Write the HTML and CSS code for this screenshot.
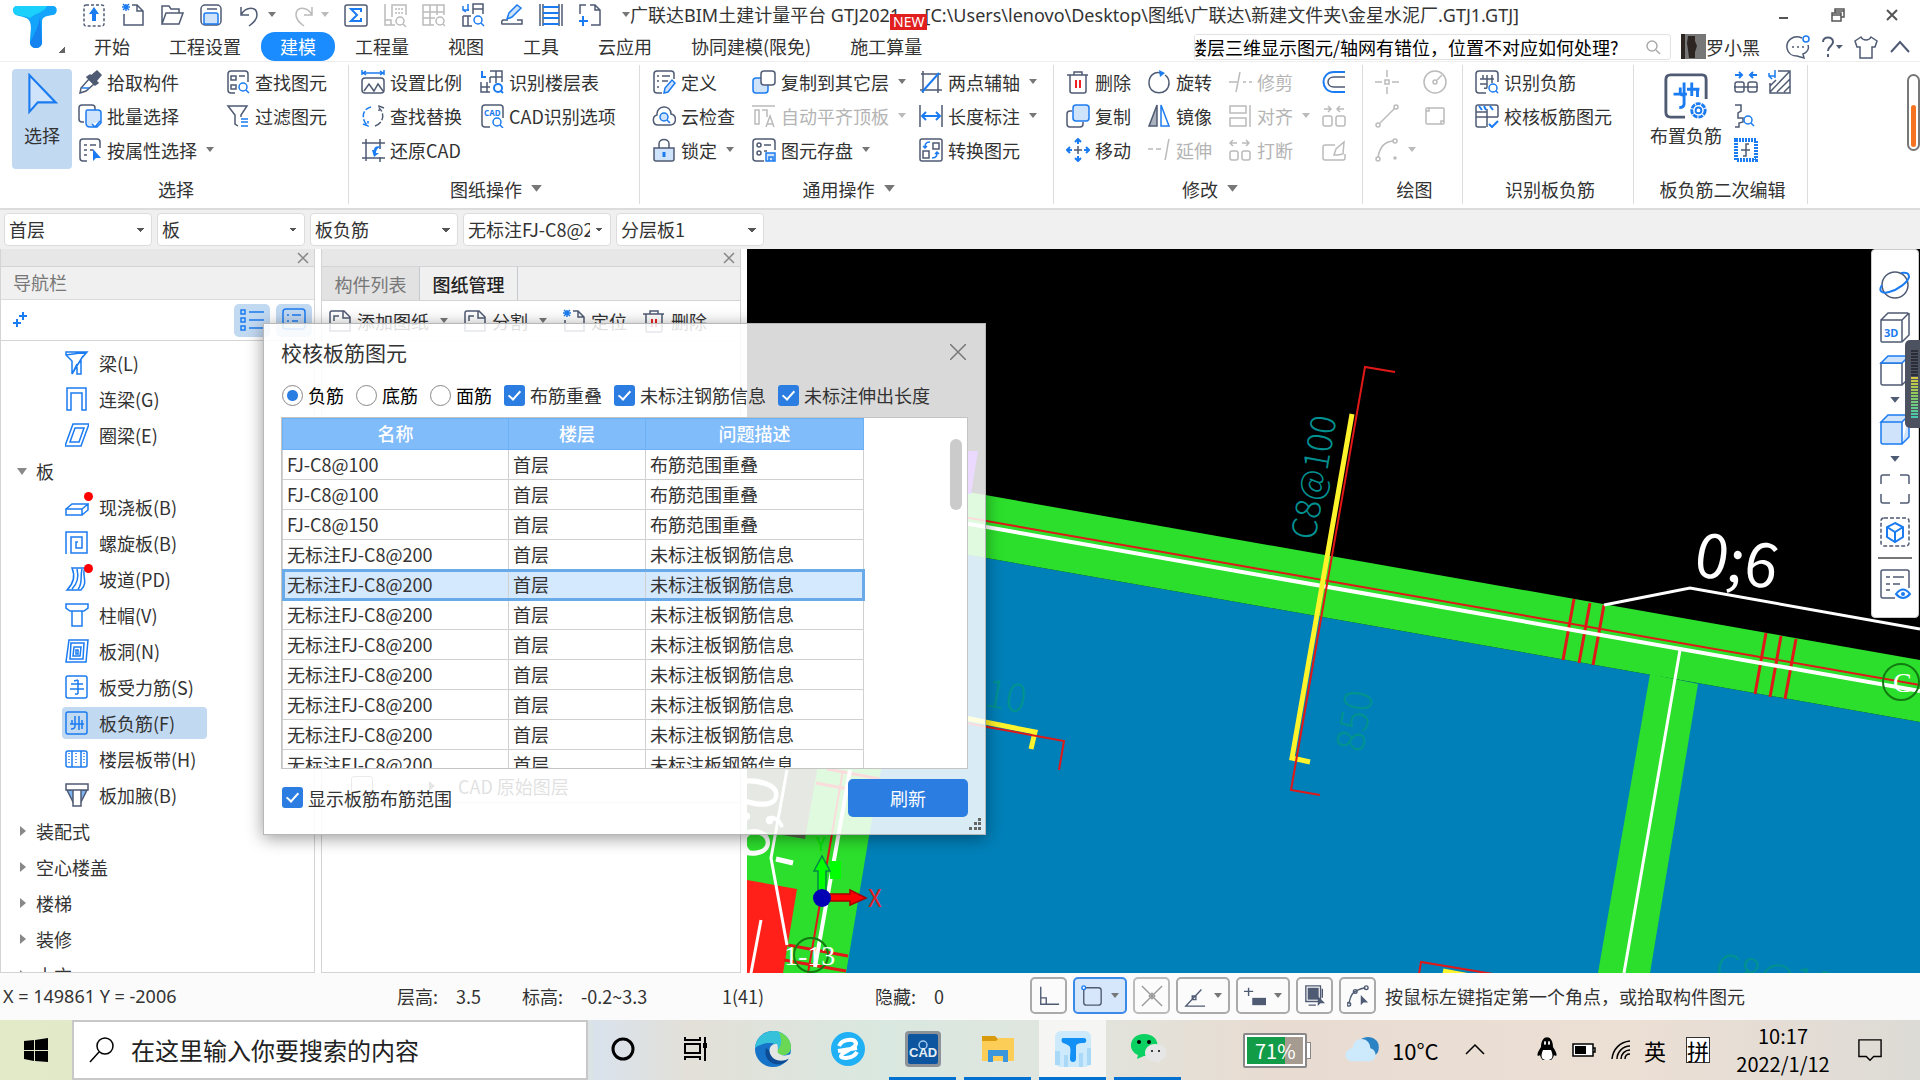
FILE: index.html
```html
<!DOCTYPE html>
<html lang="zh-CN">
<head>
    <meta charset="UTF-8">
    <meta name="viewport" content="width=device-width, initial-scale=1.0">
    <title>广联达BIM土建计量平台 GTJ2021</title>
    <link rel="stylesheet" href="styles.css">
</head>
<body>
    <!-- 图标库 -->
    <svg class="sprite" aria-hidden="true">
        <symbol id="logo" viewBox="0 0 46 44">
            <path d="M5 1h36c5 0 5 8 0 9-6 1-10 1-11 6v21c0 8-12 8-12 0 0-9 2-14 0-20C16 12 10 12 4 10 0 8 0 1 5 1z" fill="#12a5fb" stroke="none"/>
            <path d="M5 1h30c-2 6-11 7-17 12C14 11 9 11 4 10 0 8 0 1 5 1z" fill="#1bd0fb" stroke="none"/>
            <path d="M28 12l2 25c0 8-12 8-12 0 5-8 8-15 10-25z" fill="#1583f0" stroke="none"/>
        </symbol>
        <symbol id="arrow" viewBox="0 0 8 6"><path d="M0 0h8L4 5z" class="solid"/></symbol>
        <symbol id="upload" viewBox="0 0 24 24"><rect x="2" y="2" width="20" height="21" rx="2" stroke-dasharray="3 2"/><path d="M12 4l5 7h-3v7h-4v-7H7z" class="bf"/></symbol>
        <symbol id="newfile" viewBox="0 0 24 24"><path d="M11 2h5l6 6v14H3V11M16 2v6h6"/><path class="b" d="M1 4h8M5 1v7M2 1l6 6M8 1L2 7"/></symbol>
        <symbol id="open" viewBox="0 0 24 24"><path d="M2 21V3h7l2 3h8v4M2 21L6 10h17l-4 11z"/></symbol>
        <symbol id="save" viewBox="0 0 24 24"><rect x="2" y="2" width="20" height="20" rx="4"/><path d="M8 6h10"/><path class="bl" d="M5 21v-9q0-2 2-2h10q2 0 2 2v9z"/></symbol>
        <symbol id="undo" viewBox="0 0 24 24"><path d="M3 4v8h8M3 12C8 3 19 3 19 12c0 5-4 8-8 11"/></symbol>
        <symbol id="redo" viewBox="0 0 24 24"><path d="M21 4v8h-8M21 12C16 3 5 3 5 12c0 5 4 8 8 11"/></symbol>
        <symbol id="sum" viewBox="0 0 24 24"><rect x="1" y="2" width="22" height="21" rx="2"/><path class="b" stroke-width="2" d="M17 9V6H7l6 6-6 6h10v-3"/></symbol>
        <symbol id="sheetfind" viewBox="0 0 24 24"><path d="M2 1v21h10M2 17h6v5M9 14V2h14v10"/><path stroke-dasharray="2 1" d="M12 6h9M12 10h9"/><circle cx="17" cy="18" r="4"/><path d="M20 21l3 3"/></symbol>
        <symbol id="gridfind" viewBox="0 0 24 24"><path d="M12 22H1V2h21v10M1 9h21M1 15h12M8 2v20M15 2v10"/><circle cx="18" cy="18" r="4"/><path d="M21 21l2 2"/></symbol>
        <symbol id="planfind" viewBox="0 0 24 24"><path d="M12 11V1h10v10M12 6h10M2 13v10h9M2 13h8M7 13v10"/><path class="b" d="M7 1v7M2 3v4h6M5 9l-3-2"/><circle class="b" cx="17" cy="17" r="4"/><path class="b" d="M20 20l3 3"/></symbol>
        <symbol id="floors" viewBox="0 0 24 24"><path d="M10 7h12M10 7v6M16 1v12M10 1h12v11M1 12v10h9M1 17h9M7 12v10"/><path class="b" stroke-width="2" d="M2 1v6h4"/><circle class="b" stroke-width="2" cx="18" cy="18" r="4"/><path class="b" stroke-width="2" d="M21 21l2 2"/></symbol>
        <symbol id="pen" viewBox="0 0 24 24"><path d="M8 17H3q-2 1-1 4h20v-4h-5"/><path class="bl" d="M7 16l2-6 8-8 4 3-9 9z"/></symbol>
        <symbol id="film" viewBox="0 0 24 24"><path d="M1 1v22M4 1v22M20 1v22M23 1v22"/><path class="b" stroke-width="2" d="M4 4h16M4 10h16M4 15h16M4 21h16"/></symbol>
        <symbol id="addfile" viewBox="0 0 24 24"><path d="M2 11V2h6M12 2h5l5 5v15h-9M17 2v5h5"/><path class="b" stroke-width="2" d="M1 18h9M5 13v10"/></symbol>
        <symbol id="cursor" viewBox="0 0 30 40"><path class="bl" fill="#a9cbf6" stroke-width="2" d="M3 2v35l8-9h17z"/></symbol>
        <symbol id="picker" viewBox="0 0 24 24"><path fill="#4f5b73" d="M13 6l6-5 4 4-5 6 2 2-3 2-8-8 3-2z"/><path d="M11 9l5 5-8 7-6 2 1-5z"/><path class="b" d="M4 18h7"/></symbol>
        <symbol id="batch" viewBox="0 0 24 24"><path d="M17 6V4q0-3-3-3H4Q1 1 1 4v11q0 3 3 3h2"/><path class="bl" d="M9 6h11q3 0 3 3v10l-4 4h-7q-4 0-4-4V8q0-2 1-2zM14 20l3 3 5-6"/></symbol>
        <symbol id="props" viewBox="0 0 24 24"><path d="M9 23H5q-3 0-3-3V4q0-3 3-3h14q3 0 3 3v6M6 7h3M12 7h6M6 12h3M12 12h3M6 17h3"/><path class="bf" d="M15 11v12l3-3h5z"/></symbol>
        <symbol id="find" viewBox="0 0 24 24"><path d="M9 23H5q-3 0-3-3V4q0-3 3-3h14q3 0 3 3v8M5 6h5v4H5zM13 6h6M5 15h5v4H5z"/><circle class="b" cx="17" cy="17" r="4"/><path class="b" d="M20 20l3 3"/></symbol>
        <symbol id="filter" viewBox="0 0 24 24"><path d="M12 22l-3-2v-9L2 2h19l-6 9v2"/><path class="b" d="M15 15h7M15 18h7M15 22h7"/></symbol>
        <symbol id="scale" viewBox="0 0 24 24"><rect x="1" y="8" width="22" height="15" rx="3"/><path d="M3 21l5-7 5 7 4-7 5 7"/><path class="b" d="M1 0v5M23 0v5M2 3h20M5 1L2 3l3 2M19 1l3 2-3 2"/></symbol>
        <symbol id="swap" viewBox="0 0 24 24"><path class="b" stroke-dasharray="6 2" d="M10 3C1 5 0 15 6 21M2 20l5 2V17"/><path stroke-dasharray="7 2" d="M14 22c9-3 10-13 4-18M23 4l-5-2v5"/></symbol>
        <symbol id="restore" viewBox="0 0 24 24"><path d="M1 5h23M5 1v22M1 20h23M19 1v10M19 19v5"/><path class="bf" d="M21 9c-5 0-6 4-6 6h3l-5 4-2-7h2c0-3 3-5 8-3z"/></symbol>
        <symbol id="cadopt" viewBox="0 0 24 24"><path d="M10 23H5q-3 0-3-3V4q0-3 3-3h15q3 0 3 3v10"/><text x="4" y="12" class="tiny">CAD</text><circle class="b" cx="17" cy="18" r="4"/><path class="b" d="M20 21l3 3"/></symbol>
        <symbol id="define" viewBox="0 0 24 24"><path d="M10 23H5q-3 0-3-3V4q0-3 3-3h14q3 0 3 3v5M5 6h2M10 6h8M5 11h2M10 11h6M5 17h2"/><path class="bl" d="M12 23l1-5 7-8 3 3-7 9z"/></symbol>
        <symbol id="cloud" viewBox="0 0 24 24"><path d="M6 21c-6 0-6-9-1-10C4 1 19 0 19 10c6 1 6 11-1 11z"/><circle class="bl" cx="12" cy="13" r="4"/><path class="b" d="M15 16l3 3"/></symbol>
        <symbol id="lock" viewBox="0 0 24 24"><path d="M7 10V6c0-6 10-6 10 0v4"/><path fill="#cfe3fb" d="M2 10h20v11q0 2-2 2H4q-2 0-2-2z"/><path class="b" stroke-width="3" d="M12 14v5"/></symbol>
        <symbol id="copyto" viewBox="0 0 24 24"><rect class="bl" x="1" y="8" width="15" height="15" rx="3"/><rect x="9" y="1" width="14" height="14" rx="3" fill="#fff"/></symbol>
        <symbol id="align" viewBox="0 0 24 24"><path d="M0 2h23M3 6h4v14H3zM10 6h5v7M14 23l4-11 4 11M15 20h6"/></symbol>
        <symbol id="store" viewBox="0 0 24 24"><path d="M12 23H4q-3 0-3-3V4q0-3 3-3h16q3 0 3 3v8M12 7h7M12 13h3"/><circle cx="7" cy="7" r="2"/><circle cx="7" cy="15" r="2"/><path class="bl" d="M14 15h9v8h-9zM17 23v-4h4v4"/></symbol>
        <symbol id="axis" viewBox="0 0 24 24"><path d="M2 4h20M4 1v22M1 20h22M19 4v19"/><path class="b" stroke-width="2" d="M3 22L20 3"/></symbol>
        <symbol id="dim" viewBox="0 0 24 24"><path d="M1 1v22M23 1v22"/><path class="b" stroke-width="2" d="M3 12h18M7 8l-4 4 4 4M17 8l4 4-4 4"/></symbol>
        <symbol id="convert" viewBox="0 0 24 24"><rect x="1" y="1" width="22" height="22" rx="2"/><path d="M14 5h6v6h-6zM4 13h6v7H4z"/><path class="b" d="M11 4C6 4 6 7 6 10M4 8l2 2 2-2M13 20c5 0 5-3 5-6M16 16l2-2 2 2"/></symbol>
        <symbol id="trash" viewBox="0 0 24 24"><path d="M1 5h21M4 5v16q0 2 2 2h12q2 0 2-2V5M8 5V2h8v3"/><path class="r" stroke-width="2" d="M10 10v8M14 10v8"/></symbol>
        <symbol id="copy" viewBox="0 0 24 24"><path d="M17 18v2q0 3-3 3H4q-3 0-3-3V10q0-3 3-3h2"/><rect class="bl" x="7" y="1" width="16" height="16" rx="3"/></symbol>
        <symbol id="move" viewBox="0 0 24 24"><path d="M12 8v8M8 12h8"/><path class="b" stroke-width="2" d="M12 1v5M12 18v5M1 12h5M18 12h5M9 4l3-3 3 3M9 20l3 3 3-3M4 9l-3 3 3 3M20 9l3 3-3 3"/></symbol>
        <symbol id="rotate" viewBox="0 0 24 24"><path d="M14 3C7 1 2 6 2 13c0 13 20 13 20 0 0-3-1-6-4-8"/><path class="bf" d="M12 0l6 3-5 4z"/></symbol>
        <symbol id="mirror" viewBox="0 0 24 24"><path fill="#aab0bc" d="M10 1v21H2z"/><path class="b" d="M14 1v21h8z"/></symbol>
        <symbol id="trim" viewBox="0 0 24 24"><path d="M1 12h8M12 2L8 22M15 12h3M21 12h3"/></symbol>
        <symbol id="extend" viewBox="0 0 24 24"><path d="M1 11h5M9 11h5M22 1c-2 8-2 14-4 21"/></symbol>
        <symbol id="align2" viewBox="0 0 24 24"><path d="M2 2h16v7H2zM2 14h16v8H2zM22 1v22"/></symbol>
        <symbol id="split" viewBox="0 0 24 24"><rect x="2" y="13" width="8" height="9" rx="2"/><rect x="14" y="13" width="8" height="9" rx="2"/><path d="M9 5H2M5 2L2 5l3 3M14 5h7M18 2l3 3-3 3"/></symbol>
        <symbol id="merge" viewBox="0 0 24 24"><rect x="1" y="12" width="9" height="10" rx="2"/><rect x="14" y="12" width="9" height="10" rx="2"/><path class="b" d="M2 5h6M6 2l3 3-3 3M22 5h-6M18 2l-3 3 3 3"/></symbol>
        <symbol id="mergebar" viewBox="0 0 24 24"><rect x="1" y="12" width="9" height="10" rx="2"/><rect x="14" y="12" width="9" height="10" rx="2"/><path d="M0 17h24"/><path class="b" stroke-width="2" d="M1 5h7M5 2l3 3-3 3M23 5h-7M19 2l-3 3 3 3"/></symbol>
        <symbol id="offset" viewBox="0 0 24 24"><path class="b" stroke-width="2" d="M23 2H12C-2 2-2 22 12 22h11"/><path d="M23 7H12c-8 0-8 10 0 10h11"/></symbol>
        <symbol id="editbox" viewBox="0 0 24 24"><path d="M13 7H3q-2 0-2 2v11q0 2 2 2h18q2 0 2-2v-4M12 17l2-6 8-7-1 12-5 1z"/></symbol>
        <symbol id="point" viewBox="0 0 24 24"><path d="M12 0v7M12 17v7M0 12h7M17 12h7M10 10h4v4h-4z"/></symbol>
        <symbol id="circle" viewBox="0 0 24 24"><circle cx="12" cy="12" r="11"/><circle cx="12" cy="12" r="2"/><path d="M14 10l5-5"/></symbol>
        <symbol id="line" viewBox="0 0 24 24"><path d="M5 19L20 4"/><circle cx="3" cy="21" r="2"/><circle cx="21" cy="3" r="2"/></symbol>
        <symbol id="rect" viewBox="0 0 24 24"><rect x="3" y="4" width="18" height="16" rx="1"/><path d="M3 7h3V4M21 17h-3v3"/></symbol>
        <symbol id="arc" viewBox="0 0 24 24"><path d="M3 19C5 9 9 4 18 3"/><circle cx="3" cy="21" r="2"/><circle cx="20" cy="3" r="2"/><circle cx="20" cy="20" r="1"/></symbol>
        <symbol id="barfind" viewBox="0 0 24 24"><path d="M11 23H4q-3 0-3-3V4q0-3 3-3h16q3 0 3 3v8M5 9h14M8 5v4M12 5v12q0 2-3 1M5 14h7M17 5v8"/><circle class="b" cx="18" cy="18" r="4"/><path class="b" d="M21 21l2 2"/></symbol>
        <symbol id="barcheck" viewBox="0 0 24 24"><path d="M11 23H3q-2 0-2-2V3q0-2 2-2h18q2 0 2 2v10M1 13h22M12 5v18M1 8h11"/><path class="b" stroke-width="2" d="M4 2l3 4M9 2l2 4M15 2l3 4M14 20l3 3 6-6"/></symbol>
        <symbol id="layout" viewBox="0 0 46 48"><path stroke-width="3" d="M22 46H7q-5 0-5-5V7q0-5 5-5h33q4 0 4 5v20"/><path class="b" stroke-width="3" d="M10 22h14M24 17h13M17 15v5q0 3 3 3M21 10v22q0 4-5 4M29 10v14M35 17v8"/><circle class="b" stroke-width="3" cx="36" cy="39" r="7" stroke-dasharray="5 1"/><circle class="b" stroke-width="2" cx="36" cy="39" r="3"/></symbol>
        <symbol id="hatch" viewBox="0 0 24 24"><path d="M10 1h12v22H2V13M2 22L21 2M9 22L22 9M16 22l6-6M2 16l6-6"/><path class="b" d="M7 0v8M1 3v3h6M4 9L1 6"/></symbol>
        <symbol id="zig" viewBox="0 0 24 24"><path d="M1 1h6v6l-3 2v5h5v4l-4 1v4H1"/><circle class="b" cx="14" cy="16" r="4"/><path class="b" d="M17 19l3 3"/></symbol>
        <symbol id="frame" viewBox="0 0 24 24"><rect class="b" x="2" y="2" width="20" height="20" stroke-width="4" stroke-dasharray="2 1"/><path d="M15 6h-3v12h-3M7 12h9"/></symbol>
        <symbol id="beam" viewBox="0 0 24 24"><path class="b" d="M1 1h21l-6 7v15h-4V13l-5 10V10L1 4zM1 4L22 1M7 23L18 5"/></symbol>
        <symbol id="link" viewBox="0 0 24 24"><path class="b" d="M2 23V1h19v22h-4V6H6v17z"/></symbol>
        <symbol id="ring" viewBox="0 0 24 24"><path class="b" d="M8 1h16l-8 22H0zM10 5h9l-5 14H5z"/></symbol>
        <symbol id="slab" viewBox="0 0 24 24"><path class="b" d="M1 14h16v6H1zM1 14l6-5h16l-6 5M23 9v6l-6 5"/></symbol>
        <symbol id="spiral" viewBox="0 0 24 24"><path class="b" d="M1 23V1h21v21H6V6h11v11h-6v-6h2"/></symbol>
        <symbol id="ramp" viewBox="0 0 24 24"><path class="b" d="M7 1h13c-4 7 4 14-4 22H2C10 15 10 8 7 1zM12 2c2 8 0 15-5 20M17 2c-2 8 1 15-4 20"/></symbol>
        <symbol id="cap" viewBox="0 0 24 24"><path class="b" d="M1 1h22v4l-4 3H5L1 5zM7 8v15h10V8"/></symbol>
        <symbol id="hole" viewBox="0 0 24 24"><path class="b" d="M4 1h19l-2 22H1zM6 4h13l-1 16H5zM9 8h7l-1 9H8zM11 11h2v4h-2z"/></symbol>
        <symbol id="bar1" viewBox="0 0 24 24"><rect class="b" x="1" y="1" width="21" height="22" rx="2"/><path class="b" d="M6 9h12M5 14h14M13 5v14M9 6l4-1M10 19h3"/></symbol>
        <symbol id="bar2" viewBox="0 0 24 24"><rect class="b" x="1" y="1" width="21" height="22" rx="2"/><path class="b" d="M5 13h14M10 5v10q0 3-4 3M14 5v14M7 9v4M17 9v9"/></symbol>
        <symbol id="strip" viewBox="0 0 24 24"><rect class="b" x="1" y="4" width="21" height="16" rx="2"/><path class="b" d="M7 4v16M16 4v16"/><path class="b" stroke-dasharray="1 2" d="M4 6v12M11 6v12M19 6v12"/></symbol>
        <symbol id="haunch" viewBox="0 0 24 24"><path fill="#7db2f3" d="M2 7h20l-6 12H8z"/><path fill="#fff" d="M1 1h22v6H1zM8 7h8v16H8z"/></symbol>
        <symbol id="list" viewBox="0 0 24 24"><path class="b" d="M1 2h4v4H1zM1 10h4v4H1zM1 18h4v4H1zM9 4h15M9 12h15M9 20h15"/></symbol>
        <symbol id="card" viewBox="0 0 24 24"><rect class="b" x="1" y="1" width="22" height="20" rx="3"/><path class="b" d="M5 7h2M10 7h9M5 13h2M10 13h6"/></symbol>
        <symbol id="plus2" viewBox="0 0 24 24"><path class="b" stroke-width="2" d="M6 15h8M10 11v8M12 8h8M16 4v8"/></symbol>
        <symbol id="sheet" viewBox="0 0 24 24"><path d="M22 22V8l-6-6H4Q2 2 2 4v18zM6 12V7h5M15 2v7h7"/></symbol>
        <symbol id="orbit" viewBox="0 0 32 32"><circle cx="16" cy="16" r="13"/><path class="b" stroke-width="2" d="M3 16c-4 6 0 9 7 7 9-2 19-10 20-15 0-4-3-5-8-4"/></symbol>
        <symbol id="box3d" viewBox="0 0 32 32"><path d="M2 8h21v21q0 1-1 1H3q-1 0-1-1zM2 8l7-7h20M23 8l7-7M23 30l7-7V1"/><text x="5" y="25" class="small3d">3D</text></symbol>
        <symbol id="boxtop" viewBox="0 0 32 32"><path d="M2 8h21v22H4q-2 0-2-2zM23 30l7-7V1"/><path class="bl" d="M2 8l7-7h21l-7 7z"/></symbol>
        <symbol id="boxblue" viewBox="0 0 32 32"><path class="bl" d="M2 8h21v22H4q-2 0-2-2zM2 8l7-7h21l-7 7zM23 30l7-7V1"/></symbol>
        <symbol id="full" viewBox="0 0 32 32"><path d="M11 2H4Q2 2 2 4v7M21 2h7q2 0 2 2v7M2 21v7q0 2 2 2h7M30 21v7q0 2-2 2h-7"/></symbol>
        <symbol id="isolate" viewBox="0 0 32 32"><rect x="2" y="2" width="28" height="28" rx="3" stroke-dasharray="4 2"/><path class="b" stroke-width="2" d="M16 7l8 4v10l-8 5-8-5V11zM8 11l8 5 8-5M16 16v10"/></symbol>
        <symbol id="view" viewBox="0 0 32 32"><path d="M16 30H4q-2 0-2-2V4q0-2 2-2h24q2 0 2 2v16M7 9h4M14 9h11M7 16h4M14 16h7M7 22h4"/><path class="b" stroke-width="2" d="M17 26q7-9 14 0-7 8-14 0z"/><circle class="bf" cx="24" cy="26" r="2"/></symbol>
        <symbol id="ortho" viewBox="0 0 24 24"><path d="M3 2v19h20M3 14h6v7"/></symbol>
        <symbol id="snaprect" viewBox="0 0 24 24"><rect x="3" y="3" width="19" height="19" rx="3"/><circle class="b" cx="3" cy="3" r="2" fill="#fff"/></symbol>
        <symbol id="cross" viewBox="0 0 24 24"><path d="M1 1l22 22M23 1L1 23M9 12l3-3 3 3-3 3z"/></symbol>
        <symbol id="angle" viewBox="0 0 24 24"><path d="M23 23H2L19 5M9 12h4v4H9z"/></symbol>
        <symbol id="bars" viewBox="0 0 24 24"><path d="M5 3v9M0 7h10"/><path class="solid" d="M9 14h15v8H9z"/></symbol>
        <symbol id="stack" viewBox="0 0 24 24"><path class="solid" d="M4 3h12v13H4z"/><path d="M2 1h16v17H2zM20 4v10M5 22h8"/><path class="solid" d="M15 12v11l3-3h5z"/></symbol>
        <symbol id="polyarc" viewBox="0 0 24 24"><path d="M2 21C4 10 6 6 20 3"/><circle cx="2" cy="21" r="2"/><circle cx="9" cy="7" r="2"/><circle cx="21" cy="3" r="2"/><path class="solid" d="M15 11v11l3-3h5z"/></symbol>
    </svg>

    <header class="titlebar">
        <button class="app-logo" aria-label="菜单"><svg><use href="#logo"/></svg></button>
        <div class="title-rows">
            <div class="quick-row">
                <div class="quick">
                    <button><svg><use href="#upload"/></svg></button>
                    <button><svg><use href="#newfile"/></svg></button>
                    <button><svg><use href="#open"/></svg></button>
                    <button><svg><use href="#save"/></svg></button>
                    <button><svg><use href="#undo"/></svg><svg class="arrow"><use href="#arrow"/></svg></button>
                    <button class="off"><svg><use href="#redo"/></svg><svg class="arrow"><use href="#arrow"/></svg></button>
                    <button><svg><use href="#sum"/></svg></button>
                    <button class="off"><svg><use href="#sheetfind"/></svg></button>
                    <button class="off"><svg><use href="#gridfind"/></svg></button>
                    <button><svg><use href="#planfind"/></svg></button>
                    <button><svg><use href="#pen"/></svg></button>
                    <button><svg><use href="#film"/></svg></button>
                    <button><svg><use href="#addfile"/></svg></button>
                </div>
                <div class="doc-title"><svg class="arrow"><use href="#arrow"/></svg>广联达BIM土建计量平台 GTJ2021  -  [C:\Users\lenovo\Desktop\图纸\广联达\新建文件夹\金星水泥厂.GTJ1.GTJ]<span class="new-badge">NEW</span></div>
                <div class="win-controls">
                    <button aria-label="最小化"><svg viewBox="0 0 16 16"><path stroke-width="2" d="M3 11h9"/></svg></button>
                    <button aria-label="还原"><svg viewBox="0 0 16 16"><path d="M2 6h9v8H2zM2 8h9M5 6V2h9v8h-3M5 4h9"/></svg></button>
                    <button aria-label="关闭"><svg viewBox="0 0 16 16"><path stroke-width="2" d="M3 3l10 10M13 3L3 13"/></svg></button>
                </div>
            </div>
            <div class="tab-row">
                <nav class="tabs">
                    <a href="#">开始</a>
                    <a href="#">工程设置</a>
                    <a href="#" class="active">建模</a>
                    <a href="#">工程量</a>
                    <a href="#">视图</a>
                    <a href="#">工具</a>
                    <a href="#">云应用</a>
                    <a href="#">协同建模(限免)</a>
                    <a href="#">施工算量</a>
                </nav>
                <div class="help-search">
                    <input type="text" aria-label="搜索帮助" value="楼层三维显示图元/轴网有错位，位置不对应如何处理?">
                    <svg viewBox="0 0 16 16"><circle cx="7" cy="7" r="5"/><path d="M11 11l4 4"/></svg>
                </div>
                <div class="user">
                    <svg viewBox="0 0 25 25"><path fill="#777" stroke="none" d="M0 0h25v25H0z"/><path fill="#2c2522" stroke="none" d="M0 0h4v25H0zM7 2h7v5l2 5-2 6v6H8l-1-8-1-7z"/></svg>
                    <span>罗小黑</span>
                </div>
                <div class="user-tools">
                    <button aria-label="消息"><svg viewBox="0 0 24 24"><path d="M16 3C7-1 0 6 1 13c1 6 6 8 10 8l7 2-1-4c5-2 6-6 5-9M6 12h2M11 12h2M16 12h2"/><circle class="b" cx="20" cy="4" r="3"/></svg></button>
                    <button aria-label="帮助"><svg viewBox="0 0 24 24"><path stroke-width="2" d="M3 7c0-6 10-6 10 0 0 4-5 4-5 9M8 19v3"/><path class="solid" d="M16 10h7l-4 4z"/></svg></button>
                    <button aria-label="皮肤"><svg viewBox="0 0 24 24"><path d="M7 2L1 6l2 6h3v11h12V12h3l2-6-6-4c-2 4-8 4-10 0z"/></svg></button>
                    <button aria-label="收起"><svg viewBox="0 0 24 24"><path stroke-width="2" d="M3 17l9-10 9 10"/></svg></button>
                </div>
            </div>
        </div>
    </header>

    <section class="ribbon">
        <div class="group g-select">
            <div class="tools">
                <button class="big active"><svg><use href="#cursor"/></svg>选择</button>
                <button class="tool"><svg><use href="#picker"/></svg>拾取构件</button>
                <button class="tool"><svg><use href="#batch"/></svg>批量选择</button>
                <button class="tool"><svg><use href="#props"/></svg>按属性选择<svg class="arrow"><use href="#arrow"/></svg></button>
                <button class="tool"><svg><use href="#find"/></svg>查找图元</button>
                <button class="tool"><svg><use href="#filter"/></svg>过滤图元</button>
            </div>
            <h2>选择</h2>
        </div>
        <div class="group g-sheet">
            <div class="tools">
                <button class="tool"><svg><use href="#scale"/></svg>设置比例</button>
                <button class="tool"><svg><use href="#swap"/></svg>查找替换</button>
                <button class="tool"><svg><use href="#restore"/></svg>还原CAD</button>
                <button class="tool"><svg><use href="#floors"/></svg>识别楼层表</button>
                <button class="tool"><svg><use href="#cadopt"/></svg>CAD识别选项</button>
            </div>
            <h2>图纸操作<svg class="arrow"><use href="#arrow"/></svg></h2>
        </div>
        <div class="group g-common">
            <div class="tools">
                <button class="tool"><svg><use href="#define"/></svg>定义</button>
                <button class="tool"><svg><use href="#cloud"/></svg>云检查</button>
                <button class="tool"><svg><use href="#lock"/></svg>锁定<svg class="arrow"><use href="#arrow"/></svg></button>
                <button class="tool"><svg><use href="#copyto"/></svg>复制到其它层<svg class="arrow"><use href="#arrow"/></svg></button>
                <button class="tool off"><svg><use href="#align"/></svg>自动平齐顶板<svg class="arrow"><use href="#arrow"/></svg></button>
                <button class="tool"><svg><use href="#store"/></svg>图元存盘<svg class="arrow"><use href="#arrow"/></svg></button>
                <button class="tool"><svg><use href="#axis"/></svg>两点辅轴<svg class="arrow"><use href="#arrow"/></svg></button>
                <button class="tool"><svg><use href="#dim"/></svg>长度标注<svg class="arrow"><use href="#arrow"/></svg></button>
                <button class="tool"><svg><use href="#convert"/></svg>转换图元</button>
            </div>
            <h2>通用操作<svg class="arrow"><use href="#arrow"/></svg></h2>
        </div>
        <div class="group g-modify">
            <div class="tools">
                <button class="tool"><svg><use href="#trash"/></svg>删除</button>
                <button class="tool"><svg><use href="#copy"/></svg>复制</button>
                <button class="tool"><svg><use href="#move"/></svg>移动</button>
                <button class="tool"><svg><use href="#rotate"/></svg>旋转</button>
                <button class="tool"><svg><use href="#mirror"/></svg>镜像</button>
                <button class="tool off"><svg><use href="#extend"/></svg>延伸</button>
                <button class="tool off"><svg><use href="#trim"/></svg>修剪</button>
                <button class="tool off"><svg><use href="#align2"/></svg>对齐<svg class="arrow"><use href="#arrow"/></svg></button>
                <button class="tool off"><svg><use href="#split"/></svg>打断</button>
                <button class="tool" aria-label="偏移"><svg><use href="#offset"/></svg></button>
                <button class="tool off" aria-label="合并"><svg><use href="#merge"/></svg></button>
                <button class="tool off" aria-label="编辑"><svg><use href="#editbox"/></svg></button>
            </div>
            <h2>修改<svg class="arrow"><use href="#arrow"/></svg></h2>
        </div>
        <div class="group g-draw">
            <div class="tools">
                <button class="tool off" aria-label="点"><svg><use href="#point"/></svg></button>
                <button class="tool off" aria-label="直线"><svg><use href="#line"/></svg></button>
                <button class="tool off" aria-label="弧"><svg><use href="#arc"/></svg><svg class="arrow"><use href="#arrow"/></svg></button>
                <button class="tool off" aria-label="圆"><svg><use href="#circle"/></svg></button>
                <button class="tool off" aria-label="矩形"><svg><use href="#rect"/></svg></button>
            </div>
            <h2>绘图</h2>
        </div>
        <div class="group g-detect">
            <div class="tools">
                <button class="tool"><svg><use href="#barfind"/></svg>识别负筋</button>
                <button class="tool"><svg><use href="#barcheck"/></svg>校核板筋图元</button>
            </div>
            <h2>识别板负筋</h2>
        </div>
        <div class="group g-edit">
            <div class="tools">
                <button class="big"><svg><use href="#layout"/></svg>布置负筋</button>
                <button class="tool" aria-label="合并负筋"><svg><use href="#mergebar"/></svg></button>
                <button class="tool" aria-label="查改标注"><svg><use href="#zig"/></svg></button>
                <button class="tool" aria-label="布筋范围"><svg><use href="#frame"/></svg></button>
                <button class="tool" aria-label="应用同名"><svg><use href="#hatch"/></svg></button>
            </div>
            <h2>板负筋二次编辑</h2>
        </div>
        <div class="ribbon-scroll"><i></i></div>
    </section>

    <section class="combos">
        <select aria-label="楼层"><option>首层</option></select>
        <select aria-label="类别"><option>板</option></select>
        <select aria-label="构件类型"><option>板负筋</option></select>
        <select aria-label="构件"><option>无标注FJ-C8@200</option></select>
        <select aria-label="分层"><option>分层板1</option></select>
    </section>

    <main class="workspace">
        <aside class="panel nav-panel">
            <div class="panel-grip"><button aria-label="关闭"><svg viewBox="0 0 12 12"><path d="M1 1l10 10M11 1L1 11"/></svg></button></div>
            <h3>导航栏</h3>
            <div class="nav-tools">
                <button><svg><use href="#plus2"/></svg></button>
                <button class="on"><svg><use href="#list"/></svg></button>
                <button class="on"><svg><use href="#card"/></svg></button>
            </div>
            <ul class="tree">
                <li class="leaf"><svg><use href="#beam"/></svg>梁(L)</li>
                <li class="leaf"><svg><use href="#link"/></svg>连梁(G)</li>
                <li class="leaf"><svg><use href="#ring"/></svg>圈梁(E)</li>
                <li class="branch open">板</li>
                <li class="leaf dot"><svg><use href="#slab"/></svg>现浇板(B)</li>
                <li class="leaf"><svg><use href="#spiral"/></svg>螺旋板(B)</li>
                <li class="leaf dot"><svg><use href="#ramp"/></svg>坡道(PD)</li>
                <li class="leaf"><svg><use href="#cap"/></svg>柱帽(V)</li>
                <li class="leaf"><svg><use href="#hole"/></svg>板洞(N)</li>
                <li class="leaf"><svg><use href="#bar1"/></svg>板受力筋(S)</li>
                <li class="leaf selected"><svg><use href="#bar2"/></svg>板负筋(F)</li>
                <li class="leaf"><svg><use href="#strip"/></svg>楼层板带(H)</li>
                <li class="leaf"><svg><use href="#haunch"/></svg>板加腋(B)</li>
                <li class="branch">装配式</li>
                <li class="branch">空心楼盖</li>
                <li class="branch">楼梯</li>
                <li class="branch">装修</li>
                <li class="branch">土方</li>
            </ul>
        </aside>

        <aside class="panel sheet-panel">
            <div class="panel-grip"><button aria-label="关闭"><svg viewBox="0 0 12 12"><path d="M1 1l10 10M11 1L1 11"/></svg></button></div>
            <div class="panel-tabs">
                <button>构件列表</button>
                <button class="active">图纸管理</button>
            </div>
            <div class="sheet-tools">
                <button class="tool"><svg><use href="#sheet"/></svg>添加图纸<svg class="arrow"><use href="#arrow"/></svg></button>
                <button class="tool"><svg><use href="#sheet"/></svg>分割<svg class="arrow"><use href="#arrow"/></svg></button>
                <button class="tool"><svg><use href="#newfile"/></svg>定位</button>
                <button class="tool"><svg><use href="#trash"/></svg>删除</button>
            </div>
            <div class="sheet-body"></div>
            <div class="layer-row"><i></i><b></b><span>CAD 原始图层</span></div>
            <div class="sheet-rest"></div>
        </aside>

        <div class="canvas">
            <svg class="drawing" viewBox="747 249 1173 724" preserveAspectRatio="xMinYMin slice">
                <path fill="#000" d="M747 249h1173v724H747z"/>
                <path fill="#0080b9" d="M747 516L1920 722V973H747z"/>
                <path fill="#2cdf2c" d="M747 453L1920 660V722L747 516z"/>
                <path fill="#2cdf2c" d="M1650 674l48 10-48 289h-52z"/>
                <path fill="#2cdf2c" d="M747 516h180L869 836l-23 137H747z"/>
                <path fill="#57654a" d="M747 600h100l-42 239-58-10z"/>
                <path fill="#ff2019" d="M747 880l50 9-14 84h-36z"/>
                <path fill="#8000ff" d="M960 451h18l-7 43h-11z"/>
                <g class="red">
                    <path d="M747 479L1920 685"/>
                    <path d="M843 770l-35 203"/>
                    <path stroke-width="3" d="M1574 599l-11 61M1590 603l-11 60M1604 605l-11 60M1766 633l-11 61M1781 636l-11 61M1796 639l-11 60"/>
                    <path stroke-width="3" d="M827 769l53 10M816 783l32 6M788 945l60 11M784 960l62 11"/>
                </g>
                <g class="white">
                    <path stroke-width="4" d="M747 485L1920 691"/>
                    <path stroke-width="3" d="M1680 650l-56 323"/>
                    <path stroke-width="3" d="M1604 605l86-17 230 41"/>
                    <path stroke-width="4" d="M850 770l-35 197"/>
                    <path stroke-width="3" d="M787 770l-16 88 16 87M761 920l-10 53"/>
                    <path stroke-width="5" d="M776 859l17 4"/>
                </g>
                <path class="yellow" d="M1352 414l-60 344 18 4"/>
                <path class="yellow" d="M960 717l75 15-4 17"/>
                <path class="yellow" d="M1443 971l27 5"/>
                <g class="red">
                    <path d="M1395 372l-30-5-74 423 29 5"/>
                    <path d="M960 722l104 19-5 29"/>
                    <path d="M1418 980l3-18 72 12"/>
                </g>
                <text class="cad-num" transform="translate(1692 575) rotate(10)">0;6</text>
                <text class="cad-num" transform="translate(766 862) rotate(-80)">6;0</text>
                <text class="cad-dim" transform="translate(1315 541) rotate(-80)">C8@100</text>
                <text class="cad-dim dim2" transform="translate(1363 753) rotate(-80)">850</text>
                <text class="cad-dim dim2" transform="translate(984 706) rotate(10)">10</text>
                <text class="cad-dim dim2" transform="translate(1714 980) rotate(10)">C8@10</text>
                <circle class="bubble" cx="1901" cy="682" r="18"/>
                <text class="cad-axis" x="1893" y="692">C</text>
                <circle class="bubble" cx="811" cy="955" r="17"/>
                <text class="cad-axis" x="784" y="965">1-13</text>
                <!-- 坐标轴 -->
                <path fill="#0f0" d="M830 861h11v18h-11z"/>
                <path fill="#0f0" stroke="#084" d="M822 856l8 15h-4v27h-8v-27h-4z"/>
                <path fill="#f00" stroke="#a00" d="M866 898l-16 7v-4h-28v-7h28v-4z"/>
                <circle fill="#0000b4" cx="822" cy="898" r="9"/>
                <text class="axis-x" x="868" y="907">X</text>
                <text class="axis-y" x="816" y="851">Y</text>
            </svg>
            <div class="view-bar">
                <button><svg><use href="#orbit"/></svg></button>
                <button><svg><use href="#box3d"/></svg></button>
                <button><svg><use href="#boxtop"/></svg><svg class="arrow"><use href="#arrow"/></svg></button>
                <button><svg><use href="#boxblue"/></svg><svg class="arrow"><use href="#arrow"/></svg></button>
                <button><svg><use href="#full"/></svg></button>
                <button><svg><use href="#isolate"/></svg></button>
                <hr>
                <button><svg><use href="#view"/></svg></button>
            </div>
            <div class="meter"><i></i></div>
        </div>

        <form class="dialog">
            <div class="dialog-head">
                <h1>校核板筋图元</h1>
                <button type="button" aria-label="关闭"><svg viewBox="0 0 16 16"><path d="M0 0l16 16M16 0L0 16"/></svg></button>
            </div>
            <div class="options">
                <label class="strong"><input type="radio" name="kind" checked>负筋</label>
                <label class="strong"><input type="radio" name="kind">底筋</label>
                <label class="strong"><input type="radio" name="kind">面筋</label>
                <label><input type="checkbox" checked>布筋重叠</label>
                <label><input type="checkbox" checked>未标注钢筋信息</label>
                <label><input type="checkbox" checked>未标注伸出长度</label>
            </div>
            <div class="table-box">
                <table>
                    <thead>
                        <tr><th class="c-name">名称</th><th class="c-floor">楼层</th><th class="c-desc">问题描述</th></tr>
                    </thead>
                    <tbody>
                        <tr><td>FJ-C8@100</td><td>首层</td><td>布筋范围重叠</td></tr>
                        <tr><td>FJ-C8@100</td><td>首层</td><td>布筋范围重叠</td></tr>
                        <tr><td>FJ-C8@150</td><td>首层</td><td>布筋范围重叠</td></tr>
                        <tr><td>无标注FJ-C8@200</td><td>首层</td><td>未标注板钢筋信息</td></tr>
                        <tr class="selected"><td>无标注FJ-C8@200</td><td>首层</td><td>未标注板钢筋信息</td></tr>
                        <tr><td>无标注FJ-C8@200</td><td>首层</td><td>未标注板钢筋信息</td></tr>
                        <tr><td>无标注FJ-C8@200</td><td>首层</td><td>未标注板钢筋信息</td></tr>
                        <tr><td>无标注FJ-C8@200</td><td>首层</td><td>未标注板钢筋信息</td></tr>
                        <tr><td>无标注FJ-C8@200</td><td>首层</td><td>未标注板钢筋信息</td></tr>
                        <tr><td>无标注FJ-C8@200</td><td>首层</td><td>未标注板钢筋信息</td></tr>
                        <tr><td>无标注FJ-C8@200</td><td>首层</td><td>未标注板钢筋信息</td></tr>
                    </tbody>
                </table>
                <div class="thumb"></div>
            </div>
            <div class="dialog-foot">
                <label><input type="checkbox" checked>显示板筋布筋范围</label>
                <button type="button" class="primary">刷新</button>
            </div>
            <svg class="resize" viewBox="0 0 12 12"><path d="M9 0h3v3H9zM5 4h3v3H5zM9 4h3v3H9zM0 9h3v3H0zM5 9h3v3H5zM9 9h3v3H9z"/></svg>
        </form>
    </main>

    <footer class="status">
        <span class="s-coord">X = 149861 Y = -2006</span>
        <span class="s-height">层高:<b>3.5</b></span>
        <span class="s-level">标高:<b>-0.2~3.3</b></span>
        <span class="s-count">1(41)</span>
        <span class="s-hidden">隐藏:<b>0</b></span>
        <div class="snap">
            <button><svg><use href="#ortho"/></svg></button>
            <button class="wide active"><svg><use href="#snaprect"/></svg><svg class="arrow"><use href="#arrow"/></svg></button>
            <button class="dim"><svg><use href="#cross"/></svg></button>
            <button class="wide"><svg><use href="#angle"/></svg><svg class="arrow"><use href="#arrow"/></svg></button>
            <button class="wide"><svg><use href="#bars"/></svg><svg class="arrow"><use href="#arrow"/></svg></button>
            <button><svg><use href="#stack"/></svg></button>
            <button><svg><use href="#polyarc"/></svg></button>
        </div>
        <span>按鼠标左键指定第一个角点，或拾取构件图元</span>
    </footer>

    <footer class="taskbar">
        <button class="start" aria-label="开始"><svg viewBox="0 0 24 24"><path d="M0 3l10-1v10H0zM11 2l13-2v12H11zM0 13h10v10L0 21zM11 13h13v11l-13-1z"/></svg></button>
        <label class="win-search">
            <svg viewBox="0 0 26 26"><circle cx="16" cy="9" r="8"/><path d="M10 15L1 25"/></svg>
            <input type="text" placeholder="在这里输入你要搜索的内容">
        </label>
        <div class="apps">
            <button class="plain"><svg viewBox="0 0 36 36"><circle cx="18" cy="18" r="10" fill="none" stroke="#000" stroke-width="3"/></svg></button>
            <button class="plain"><svg viewBox="0 0 36 36"><path fill="none" stroke="#000" stroke-width="2" d="M5 6v3h15V6M5 29v-3h15v3M5 13h15v9H5zM25 6v24"/><path d="M23 12h4v5h-4z"/></svg></button>
            <button class="plain"><svg viewBox="0 0 36 36">
                <circle cx="18" cy="18" r="18" fill="#1673c7"/>
                <path fill="#35c1d9" d="M0 17C2-5 34-6 36 16c0 6-5 9-11 8-3 0-5-2-3-4 3-4-1-8-7-8-7 0-13 3-15 5z"/>
                <path fill="#6ad755" d="M24 1c8 3 12 9 12 15 0 6-5 9-11 8-3 0-5-2-3-4 4-4 6-9 2-19z"/>
                <path fill="#0d4c94" d="M11 17c-3 10 5 18 15 16 4-1 7-3 8-6-9 4-18 0-20-8z"/>
                <path fill="#e3e6e3" d="M22 13c-8-1-10 8-4 14 5 4 12 3 17 0l1-4c-5 2-10 2-13-1-1-2 1-5-1-9z"/>
            </svg></button>
            <button class="plain"><svg viewBox="0 0 36 36"><circle cx="18" cy="18" r="17" fill="#1fb0f5"/><path fill="none" stroke="#fff" stroke-width="4" d="M9 15c3-7 15-8 17-3 1 5-15 9-15 13 0 3 12 3 16-4M8 20l19-3"/></svg></button>
            <button class="running"><svg viewBox="0 0 36 36"><rect width="36" height="36" rx="4" fill="#8d9299"/><rect x="3" y="3" width="30" height="30" rx="2" fill="#0d559e"/><circle cx="18" cy="14" r="4" fill="none" stroke="#9cc8ee"/><text x="4" y="26" class="cad-logo">CAD</text></svg></button>
            <button class="running"><svg viewBox="0 0 36 36"><path fill="#d99b0c" d="M2 5h13l3 3v6H2z"/><path fill="#fdce57" d="M2 10h14l3-3h15v23H2z"/><path fill="#3a96dd" d="M8 19h20v12h-5v-6H13v6H8z"/></svg></button>
            <button class="running current"><svg viewBox="0 0 36 36"><rect width="36" height="36" rx="6" fill="#cdeafc"/><path fill="#a9d9f7" d="M0 20h5v14H0zM9 24h4v12H9zM24 22h4v14h-4zM32 17h4v17h-4z"/><path fill="#1290f5" d="M8 7h21c3 0 3 5 0 5-6 0-8 1-8 4v12c0 4-6 4-6 0 0-5 1-9 0-12-1-2-4-3-7-4-2-1-2-5 0-5z"/></svg></button>
            <button class="running"><svg viewBox="0 0 36 36"><path fill="#0ad162" d="M14 3c18 0 18 22 0 22l-7 3 1-4C-4 19 0 3 14 3z"/><circle cx="9" cy="11" r="2"/><circle cx="19" cy="11" r="2"/><path fill="#e6e6e6" d="M25 13c14 0 14 14 5 17v2l-4-1c-15 0-14-18-1-18z"/><circle cx="22" cy="20" r="1"/><circle cx="29" cy="20" r="1"/></svg></button>
        </div>
        <div class="tray">
            <div class="battery"><span>71%</span></div>
            <svg class="weather" viewBox="0 0 36 30"><path fill="#2c83c4" d="M16 4C24-2 36 2 36 12c0 5-2 8-5 9z"/><path fill="#cdeafd" d="M7 27c-9-1-9-13 1-14C9 0 26 0 27 13c8 2 7 14-1 14z"/></svg>
            <span class="temp">10°C</span>
            <button class="up" aria-label="显示隐藏的图标"><svg viewBox="0 0 20 20"><path d="M1 14l9-9 9 9"/></svg></button>
            <svg class="qq" viewBox="0 0 20 26"><path d="M4 10c0-13 12-13 12 0 6 9 3 10 1 8-1 4-3 5-3 5H6s-2-1-3-5c-2 2-5 1 1-8z"/><path fill="#fff" d="M6 13h8c4 9-1 10-4 10s-8-1-4-10z"/><ellipse cx="8" cy="6" rx="1" ry="2" fill="#fff"/><ellipse cx="12" cy="6" rx="1" ry="2" fill="#fff"/></svg>
            <svg class="power" viewBox="0 0 24 14"><path fill="#fff" stroke="#000" d="M1 1h20v12H1zM21 5h2v4h-2z"/><path d="M3 3h11v8H3z"/></svg>
            <svg class="wifi" viewBox="0 0 20 20"><path d="M1 19C2 9 9 2 19 1M6 19c0-7 6-13 13-13M10 19c0-5 4-9 9-9M14 19c0-3 2-5 5-5"/></svg>
            <span class="lang">英</span>
            <span class="ime">拼</span>
            <time>10:17<br>2022/1/12</time>
            <button class="notify" aria-label="通知"><svg viewBox="0 0 26 26"><path d="M1 2h24v18h-8l-4 4-4-4H1z"/></svg></button>
        </div>
    </footer>
</body>
</html>
```

FILE: styles.css
```css
* {
    box-sizing: border-box;
}
body {
    --ink: #4f5b73;
    --blue: #1b7bf0;
    --red: #e22;
    margin: 0;
    height: 100vh;
    display: flex;
    flex-direction: column;
    overflow: hidden;
    background: #fff;
    color: #333;
    font-family: "Noto Sans CJK SC", "Noto Sans", sans-serif;
    font-size: 18px;
    line-height: 24px;
}
button, input, select {
    font: inherit;
    color: inherit;
}
button {
    display: flex;
    align-items: center;
    padding: 0;
    border: none;
    background: none;
    white-space: nowrap;
}
h1, h2, h3, ul {
    margin: 0;
    padding: 0;
    font-weight: normal;
}
a {
    color: inherit;
    text-decoration: none;
}

/* icons */
.sprite {
    position: absolute;
    width: 0;
    height: 0;
}
svg {
    flex: none;
    width: 24px;
    height: 24px;
    fill: none;
    stroke: var(--ink);
    stroke-width: 1.5;
}
.b { stroke: var(--blue); }
.bl { stroke: var(--blue); fill: #cfe3fb; }
.bf { stroke: none; fill: var(--blue); }
.r { stroke: var(--red); }
.solid { stroke: none; fill: var(--ink); }
.arrow {
    --ink: #777;
    width: 8px;
    height: 6px;
}
.off {
    --ink: #bbb;
    --blue: #bbb;
    color: #b4b4b4;
}
.off .arrow { --ink: #bbb; }
.tiny {
    font: bold 8px "Noto Sans", sans-serif;
    fill: #1b7bf0;
    stroke: none;
}
.small3d {
    font: bold 11px "Noto Sans", sans-serif;
    fill: #1b7bf0;
    stroke: none;
}

/* title bar */
.titlebar {
    display: flex;
    height: 62px;
    border-bottom: 1px solid #eee;
}
.app-logo {
    width: 75px;
    padding-left: 12px;
    align-items: flex-start;
    padding-top: 5px;
    background: linear-gradient(135deg, transparent 50%, #666 50%) no-repeat 59px 47px / 6px 6px;
}
.app-logo svg {
    width: 46px;
    height: 44px;
}
.title-rows {
    flex: 1;
    min-width: 0;
}
.quick-row, .tab-row {
    display: flex;
    align-items: center;
}
.quick-row {
    height: 32px;
    padding-bottom: 2px;
}
.quick {
    display: flex;
    gap: 15px;
    padding-left: 7px;
}
.quick .arrow { margin-left: 6px; }
.doc-title {
    position: relative;
    display: flex;
    align-items: center;
    flex: 1;
    margin-left: 20px;
    font-family: "Noto Sans", "Noto Sans CJK SC", sans-serif;
    white-space: pre;
}
.new-badge {
    position: absolute;
    left: 268px;
    top: 11px;
    padding: 0 3px;
    background: #e11f1f;
    color: #fff;
    font-size: 14px;
    line-height: 16px;
}
.win-controls {
    display: flex;
    gap: 38px;
    padding-right: 20px;
}
.win-controls svg {
    width: 16px;
    height: 16px;
    stroke: #555;
}
.tab-row { height: 29px; }
.tabs {
    display: flex;
    gap: 1px;
    flex: 1;
}
.tabs a {
    padding: 0 19px;
    line-height: 29px;
    border-radius: 14px;
    white-space: nowrap;
}
.tabs .active {
    background: #1a8cff;
    color: #fff;
}
.help-search {
    display: flex;
    align-items: center;
    width: 477px;
    height: 26px;
    border: 1px solid #e2e2e2;
    border-radius: 3px;
}
.help-search input {
    flex: 1;
    min-width: 0;
    height: 24px;
    padding: 0;
    border: none;
    color: #000;
    text-indent: -6px;
}
.help-search svg {
    width: 16px;
    height: 16px;
    margin: 0 9px;
    stroke: #aaa;
}
.user {
    display: flex;
    align-items: center;
    margin-left: 10px;
}
.user svg {
    width: 25px;
    height: 25px;
}
.user-tools {
    display: flex;
    gap: 10px;
    margin: 0 8px 0 26px;
}

/* ribbon */
.ribbon {
    display: flex;
    height: 148px;
    padding-top: 3px;
    border-bottom: 2px solid #dcdcdc;
}
.group {
    display: flex;
    flex-direction: column;
    flex: none;
    margin-bottom: 4px;
    border-right: 1px solid #dcdcdc;
}
.tools {
    display: grid;
    grid-template-rows: repeat(3, 34px);
    grid-auto-flow: column;
    align-items: center;
    padding-left: 12px;
}
.group h2 {
    display: flex;
    align-items: center;
    justify-content: center;
    gap: 9px;
    margin-top: 10px;
    padding-left: 4px;
    font-size: 18px;
}
.group h2 .arrow {
    width: 11px;
    height: 8px;
}
.tool { gap: 5px; }
.tool .arrow { margin-left: 4px; }
.big {
    grid-row: 1 / 4;
    align-self: stretch;
    flex-direction: column;
    gap: 8px;
    width: 60px;
    height: 100px;
    margin-top: 4px;
    padding-top: 4px;
    border-radius: 4px;
}
.big.active { background: #c2d9f2; }
.big svg {
    width: 32px;
    height: 42px;
}
.g-select { width: 349px; }
.g-select .tools { grid-template-columns: 66px 148px; }
.g-sheet { width: 291px; }
.g-sheet .tools { grid-template-columns: 119px; }
.g-common { width: 414px; }
.g-common .tools { grid-template-columns: 100px 167px; }
.g-modify { width: 309px; }
.g-modify .tools { grid-template-columns: 81px 81px 94px; }
.g-draw { width: 100px; }
.g-draw .tools { grid-template-columns: 48px; }
.g-detect { width: 171px; }
.g-edit { width: 174px; }
.g-edit .tools { grid-template-columns: 88px 34px; }
.g-edit .big {
    gap: 4px;
    width: 80px;
}
.g-edit .big svg {
    width: 46px;
    height: 46px;
}
.ribbon-scroll {
    display: flex;
    align-items: flex-end;
    width: 13px;
    height: 77px;
    margin: 9px 0 0 auto;
    padding: 2px;
    border: 2px solid #777;
    border-radius: 7px;
}
.ribbon-scroll i {
    flex: 1;
    height: 42px;
    border-radius: 3px;
    background: #f47421;
}

/* combo row */
.combos {
    display: flex;
    align-items: center;
    gap: 5px;
    height: 39px;
    padding-left: 4px;
    background: #f0f0f0;
}
.combos select {
    appearance: none;
    width: 148px;
    height: 33px;
    padding: 0 20px 2px 4px;
    border: 1px solid #dcdcdc;
    border-radius: 4px;
    background-color: #fff;
    background-image: linear-gradient(45deg, transparent 50%, #555 50%), linear-gradient(-45deg, transparent 50%, #555 50%);
    background-repeat: no-repeat;
    background-size: 4px 4px;
    background-position: 131px 14px, 135px 14px;
}

/* workspace */
.workspace {
    position: relative;
    display: flex;
    flex: 1;
    min-height: 0;
}
.panel {
    display: flex;
    flex-direction: column;
    flex: none;
    border: 1px solid #d4d4d4;
    border-top: none;
    overflow: hidden;
}
.nav-panel {
    width: 315px;
    margin-right: 6px;
}
.sheet-panel {
    width: 420px;
    margin-right: 6px;
}
.panel-grip {
    display: flex;
    align-items: center;
    justify-content: flex-end;
    flex: none;
    height: 18px;
    padding-right: 5px;
    border-bottom: 1px solid #d4d4d4;
    background: #e7e7e7;
}
.panel-grip svg {
    width: 12px;
    height: 12px;
    stroke: #888;
}
.nav-panel h3 {
    flex: none;
    height: 33px;
    padding-left: 12px;
    border-bottom: 1px solid #dcdcdc;
    background: #f0f0f0;
    color: #777;
    font-size: 18px;
    line-height: 30px;
}
.nav-tools {
    display: flex;
    align-items: center;
    flex: none;
    gap: 6px;
    height: 41px;
    padding: 0 2px 0 6px;
    border-bottom: 1px solid #d4d4d4;
}
.nav-tools .on {
    justify-content: center;
    width: 36px;
    height: 33px;
    border-radius: 5px;
    background: #c2d9f2;
}
.nav-tools button:first-child { margin-right: auto; }
.tree {
    padding-top: 4px;
    list-style: none;
}
.tree li {
    position: relative;
    display: flex;
    align-items: center;
    gap: 10px;
    width: 145px;
    height: 32px;
    margin: 2px 0 4px 61px;
    padding-left: 3px;
    border-radius: 4px;
    white-space: nowrap;
}
.tree .selected { background: #c2d9f2; }
.tree .branch {
    margin-left: 19px;
    padding-left: 0;
}
.branch::before {
    content: "";
    border-left: 6px solid #888;
    border-top: 5px solid transparent;
    border-bottom: 5px solid transparent;
}
.branch.open::before {
    margin: 0 -1px 0 -3px;
    border-top: 7px solid #888;
    border-left: 5px solid transparent;
    border-right: 5px solid transparent;
    border-bottom: none;
}
.dot::after {
    content: "";
    position: absolute;
    left: 22px;
    top: 1px;
    width: 9px;
    height: 9px;
    border-radius: 50%;
    background: #f00;
}
.panel-tabs {
    display: flex;
    flex: none;
    height: 34px;
    border-bottom: 1px solid #d4d4d4;
    background: #f0f0f0;
}
.panel-tabs button {
    justify-content: center;
    width: 98px;
    border-right: 1px solid #c4c9d0;
    background: #e2e2e2;
    color: #777;
}
.panel-tabs .active {
    background: #f0f0f0;
    color: #222;
    font-weight: 500;
}
.sheet-tools {
    display: flex;
    flex: none;
    gap: 15px;
    height: 40px;
    padding-left: 6px;
}
.sheet-tools .arrow { margin-left: 6px; }
.sheet-body {
    flex: 1;
    border-top: 1px solid #eee;
}
.layer-row {
    display: flex;
    align-items: center;
    gap: 16px;
    height: 34px;
    padding-left: 29px;
    border-bottom: 1px solid #ddd;
}
.layer-row i {
    width: 22px;
    height: 20px;
    border: 1px solid #777;
    border-radius: 3px;
}
.layer-row b {
    margin: 0 7px 0 40px;
    border-left: 6px solid #555;
    border-top: 5px solid transparent;
    border-bottom: 5px solid transparent;
}
.sheet-rest { height: 169px; }

/* model view */
.canvas {
    position: relative;
    flex: 1;
    min-width: 0;
    background: #000;
}
.drawing {
    display: block;
    width: 100%;
    height: 100%;
    stroke: none;
}
.drawing .red { stroke: #e01818; stroke-width: 2; }
.drawing .white { stroke: #fff; }
.drawing .yellow { stroke: #fff32b; stroke-width: 5; }
.cad-num {
    font-size: 60px;
    fill: #fff;
}
.cad-dim {
    font-size: 34px;
    font-weight: 300;
    fill: #009090;
}
.dim2 {
    font-size: 38px;
    fill: #00938f;
}
.bubble { stroke: #117a11; stroke-width: 2; }
.cad-axis {
    font: 28px "Liberation Serif", serif;
    fill: #fff;
}
.axis-x { font-size: 24px; fill: #e02020; }
.axis-y { font-size: 18px; fill: #00e000; }
.view-bar {
    position: absolute;
    right: 1px;
    top: 0;
    display: flex;
    flex-direction: column;
    align-items: center;
    gap: 11px;
    width: 48px;
    height: 369px;
    padding-top: 19px;
    border: 1px solid #ccc;
    border-radius: 4px;
    background: #fff;
}
.view-bar button {
    flex-direction: column;
    gap: 10px;
}
.view-bar svg {
    width: 32px;
    height: 32px;
}
.view-bar .arrow {
    --ink: #4f5b73;
    width: 10px;
    height: 7px;
    margin-bottom: -1px;
}
.view-bar hr {
    width: 34px;
    margin: -2px 0;
    border: none;
    border-top: 2px solid #777;
}
.meter {
    position: absolute;
    right: 0;
    top: 91px;
    width: 15px;
    height: 88px;
    padding: 10px 2px 10px 6px;
    border-radius: 5px 0 0 5px;
    background: #4d5261;
}
.meter i {
    display: block;
    height: 68px;
    background: repeating-linear-gradient(transparent 0 2px, #4d5261 2px 3px), linear-gradient(#2b2e38 40%, #d8c840 40%, #8fcc5a 65%, #45c9b0);
}

/* check dialog */
.dialog {
    position: absolute;
    left: 263px;
    top: 74px;
    width: 723px;
    height: 512px;
    padding: 0 17px;
    border: 1px solid #b8b8b8;
    background: rgba(255, 255, 255, .85);
    box-shadow: 0 3px 16px rgba(0, 0, 0, .4);
}
.dialog-head {
    display: flex;
    align-items: center;
    justify-content: space-between;
    height: 56px;
    padding-right: 2px;
}
.dialog h1 {
    font-size: 21px;
    line-height: 28px;
}
.dialog-head svg {
    width: 16px;
    height: 16px;
    stroke: #777;
}
.options {
    display: flex;
    align-items: center;
    gap: 12px;
    height: 30px;
    padding-left: 1px;
    white-space: nowrap;
}
.dialog label {
    display: flex;
    align-items: center;
    gap: 5px;
}
.strong { color: #000; }
.dialog input {
    appearance: none;
    position: relative;
    width: 21px;
    height: 21px;
    margin: 0;
    background: #fff;
}
.dialog input[type="radio"] {
    border: 1px solid #888;
    border-radius: 50%;
}
.dialog input[type="radio"]:checked {
    background: radial-gradient(circle, #2b7de1 0 5px, #fff 6px);
}
.dialog input[type="checkbox"] {
    border-radius: 3px;
    background: #2b7de1;
}
.dialog input[type="checkbox"]::after {
    content: "";
    position: absolute;
    left: 7px;
    top: 3px;
    width: 5px;
    height: 10px;
    border: solid #fff;
    border-width: 0 2px 2px 0;
    transform: rotate(42deg);
}
.table-box {
    position: relative;
    height: 352px;
    margin-top: 7px;
    border: 1px solid #c4c4c4;
    background: #fff;
    overflow: hidden;
}
table {
    width: 582px;
    table-layout: fixed;
    border-collapse: collapse;
}
th, td {
    height: 30px;
    padding: 0 4px 2px;
    border: 1px solid #d0d0d0;
    text-align: left;
    white-space: nowrap;
}
th {
    height: 31px;
    border-color: #6cb0f5;
    background: #80bbfa;
    color: #fff;
    font-weight: 500;
    text-align: center;
}
.c-name { width: 226px; }
.c-floor { width: 137px; }
tr.selected {
    outline: 3px solid #69abe9;
    outline-offset: -2px;
    background: #d4e8fe;
}
.thumb {
    position: absolute;
    right: 5px;
    top: 21px;
    width: 12px;
    height: 71px;
    border-radius: 6px;
    background: #cbcbcb;
}
.dialog-foot {
    display: flex;
    align-items: center;
    justify-content: space-between;
    height: 57px;
    padding-left: 1px;
}
.primary {
    justify-content: center;
    width: 120px;
    height: 38px;
    border-radius: 5px;
    background: #2b7de1;
    color: #fff;
}
.resize {
    position: absolute;
    right: 4px;
    bottom: 4px;
    width: 12px;
    height: 12px;
    fill: #666;
    stroke: none;
}

/* status bar */
.status {
    display: flex;
    align-items: center;
    flex: none;
    height: 47px;
    padding: 0 0 2px 3px;
    background: #fbfbfb;
    white-space: nowrap;
}
.status b {
    margin-left: 18px;
    font-weight: normal;
}
.s-coord {
    width: 394px;
    font-family: "Noto Sans", sans-serif;
}
.s-height { width: 125px; }
.s-level { width: 200px; }
.s-count { width: 153px; }
.s-hidden { width: 155px; }
.snap {
    display: flex;
    gap: 6px;
    margin-right: 9px;
}
.snap button {
    justify-content: center;
    gap: 8px;
    width: 37px;
    height: 37px;
    border: 2px solid #aaa;
    border-radius: 5px;
}
.snap .wide { width: 54px; }
.snap svg:first-child {
    width: 22px;
    height: 22px;
}
.snap .active {
    border-color: #3b8aea;
    background: #d6e6fb;
}
.snap .dim {
    --ink: #999;
    border-color: #bbb;
}

/* windows taskbar */
.taskbar {
    display: flex;
    flex: none;
    height: 60px;
    background: linear-gradient(90deg, #e3eac8 0, #dfe6cf 30%, #d9e2ec 31%, #e3e0d8 36%, #d9e8e0 46%, #dfe6df 54%, #e8dcd2 66%, #ecdfd4 85%, #dddbd6);
    color: #000;
}
.start {
    justify-content: center;
    width: 72px;
}
.start svg {
    fill: #000;
    stroke: none;
}
.win-search {
    display: flex;
    align-items: center;
    gap: 16px;
    width: 516px;
    padding-left: 15px;
    border: 2px solid #c8c8c8;
    background: #fff;
}
.win-search svg {
    width: 26px;
    height: 30px;
    stroke: #000;
}
.win-search input {
    flex: 1;
    min-width: 0;
    padding: 0;
    border: none;
    font-size: 24px;
    line-height: 36px;
}
.win-search input::placeholder {
    color: #222;
}
.apps {
    display: flex;
    gap: 8px;
    padding-left: 1px;
}
.apps button {
    justify-content: center;
    width: 67px;
    border-bottom: 3px solid transparent;
}
.apps svg {
    width: 36px;
    height: 36px;
    fill: #000;
    stroke: none;
}
.apps .running { border-color: #0071d0; }
.apps .current { background: #f5f5f3; }
.cad-logo {
    font: bold 13px "Liberation Sans", sans-serif;
    fill: #e6eef5;
}
.tray {
    display: flex;
    align-items: center;
    margin-left: auto;
    padding-right: 38px;
}
.battery {
    position: relative;
    width: 64px;
    height: 35px;
    margin-right: 38px;
    padding: 2px;
    border: 2px solid #888;
    border-radius: 2px;
    background: #fff;
}
.battery::after {
    content: "";
    position: absolute;
    right: -6px;
    top: 7px;
    width: 3px;
    height: 15px;
    border: 1px solid #888;
    background: #fff;
}
.battery span {
    display: block;
    padding-left: 8px;
    background: linear-gradient(90deg, #139c48 68%, #a59b90 68%);
    color: #fff;
    font-size: 20px;
    line-height: 27px;
}
.tray svg { stroke: #000; }
.tray .weather {
    width: 34px;
    height: 28px;
    stroke: none;
}
.temp {
    width: 73px;
    margin-left: 13px;
    font-size: 22px;
}
.tray .up svg {
    width: 20px;
    height: 20px;
}
.tray .qq {
    width: 20px;
    height: 26px;
    margin: 0 15px 0 52px;
    fill: #000;
    stroke: none;
}
.tray .power {
    height: 14px;
    fill: #000;
    stroke: none;
}
.tray .wifi {
    width: 20px;
    height: 20px;
    margin: 0 13px 0 15px;
}
.lang, .ime { font-size: 22px; }
.ime {
    margin: 0 26px 0 20px;
    border: 1px solid #333;
    background: #fff;
}
time {
    width: 94px;
    font-size: 20px;
    line-height: 28px;
    text-align: center;
}
.notify { margin-left: 28px; }
```
